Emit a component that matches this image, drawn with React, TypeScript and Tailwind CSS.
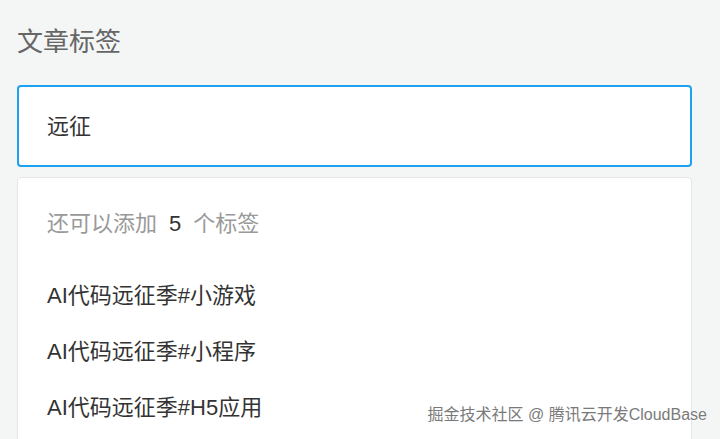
const tags = ["AI代码远征季#小游戏", "AI代码远征季#小程序", "AI代码远征季#H5应用"];

export default function App() {
  return (
    <div
      className="relative h-[439px] w-[720px] overflow-hidden bg-[#f4f5f5] pl-[17px] pr-[28px]"
      style={{ fontFamily: '"Liberation Sans", "Noto Sans CJK SC", sans-serif' }}
    >
      <h2 className="pt-[24px] text-[26px] leading-[36px] text-[#666]">文章标签</h2>
      <div className="mt-[25px] flex h-[82px] items-center rounded-[4px] border-2 border-[#1da1f2] bg-white pl-[28px]">
        <span className="text-[22px] text-[#333]">远征</span>
      </div>
      <div className="mt-[10px] h-[300px] rounded-[4px] border border-[#e4e6eb] bg-white pt-[28px]">
        <div className="pl-[29px] text-[22px] leading-[36px] text-[#999]">
          还可以添加<span className="mx-[12px] text-[#333]">5</span>个标签
        </div>
        <ul className="mt-[25px]">
          {tags.map((t) => (
            <li key={t} className="flex h-[56px] items-center pl-[29px] text-[22px] text-[#333]">
              {t}
            </li>
          ))}
        </ul>
      </div>
      <div
        className="absolute bottom-[12px] right-[13px] text-[16px] text-[#7a7a7a]"
        style={{ textShadow: "0 0 2px #fff, 0 0 2px #fff" }}
      >
        掘金技术社区 @ 腾讯云开发CloudBase
      </div>
    </div>
  );
}
